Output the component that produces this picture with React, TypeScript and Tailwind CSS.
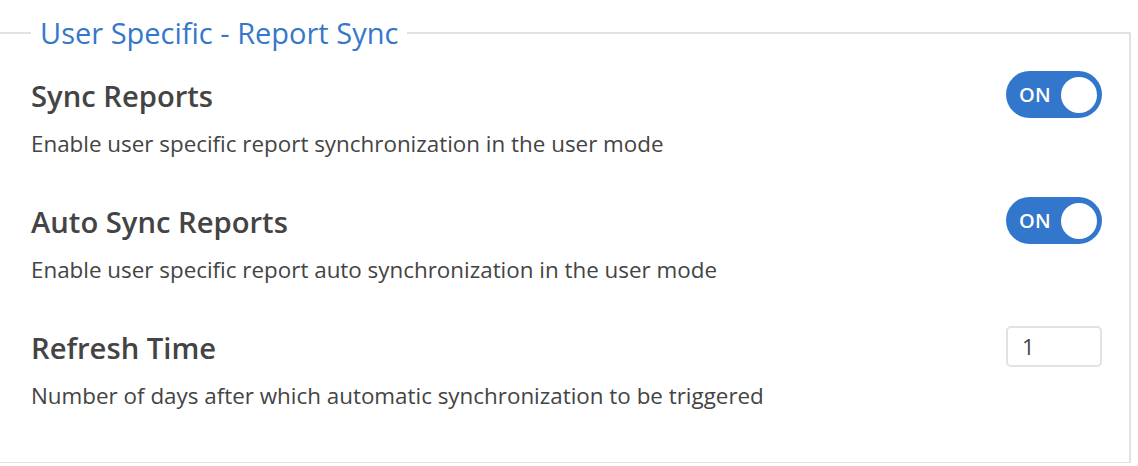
import React from "react";

function Toggle() {
  return (
    <div className="flex h-[47px] w-[96px] items-center justify-between rounded-full bg-[#3377cc] pl-[13px] pr-[5px]">
      <span className="text-[20px] font-semibold leading-none tracking-[0.3px] text-white">ON</span>
      <span className="h-[36px] w-[36px] rounded-full bg-white" />
    </div>
  );
}

function Row({ title, desc, control }: { title: string; desc: string; control: React.ReactNode }) {
  return (
    <div className="flex h-[126px] items-start justify-between">
      <div className="flex flex-col">
        <div className="text-[29.2px] font-semibold leading-[40px] text-[#444444]">{title}</div>
        <div className="mt-[14px] text-[22.4px] leading-[28px] text-[#444444]">{desc}</div>
      </div>
      <div className="mr-[27px]">{control}</div>
    </div>
  );
}

export default function App() {
  return (
    <div className="h-[466px] w-[1138px] bg-white" style={{ fontFamily: '"Open Sans", sans-serif' }}>
      <fieldset className="ml-[-2px] mt-[-3px] h-[467px] w-[1133px] border-2 border-[#e2e2e2] pl-[31px] pt-0">
        <legend className="px-[9px] text-[29px] leading-[72px] text-[#3578c9]">User Specific - Report Sync</legend>
        <div className="mt-[7px] flex flex-col">
          <Row title="Sync Reports" desc="Enable user specific report synchronization in the user mode" control={<div className="mt-[-5px]"><Toggle /></div>} />
          <Row title="Auto Sync Reports" desc="Enable user specific report auto synchronization in the user mode" control={<div className="mt-[-5px]"><Toggle /></div>} />
          <Row
            title="Refresh Time"
            desc="Number of days after which automatic synchronization to be triggered"
            control={
              <div className="mt-[-2px] flex h-[41px] w-[96px] items-center rounded-[5px] border-2 border-[#e2e2e2] pl-[14px] text-[22px] text-[#444444]">1</div>
            }
          />
        </div>
      </fieldset>
    </div>
  );
}
